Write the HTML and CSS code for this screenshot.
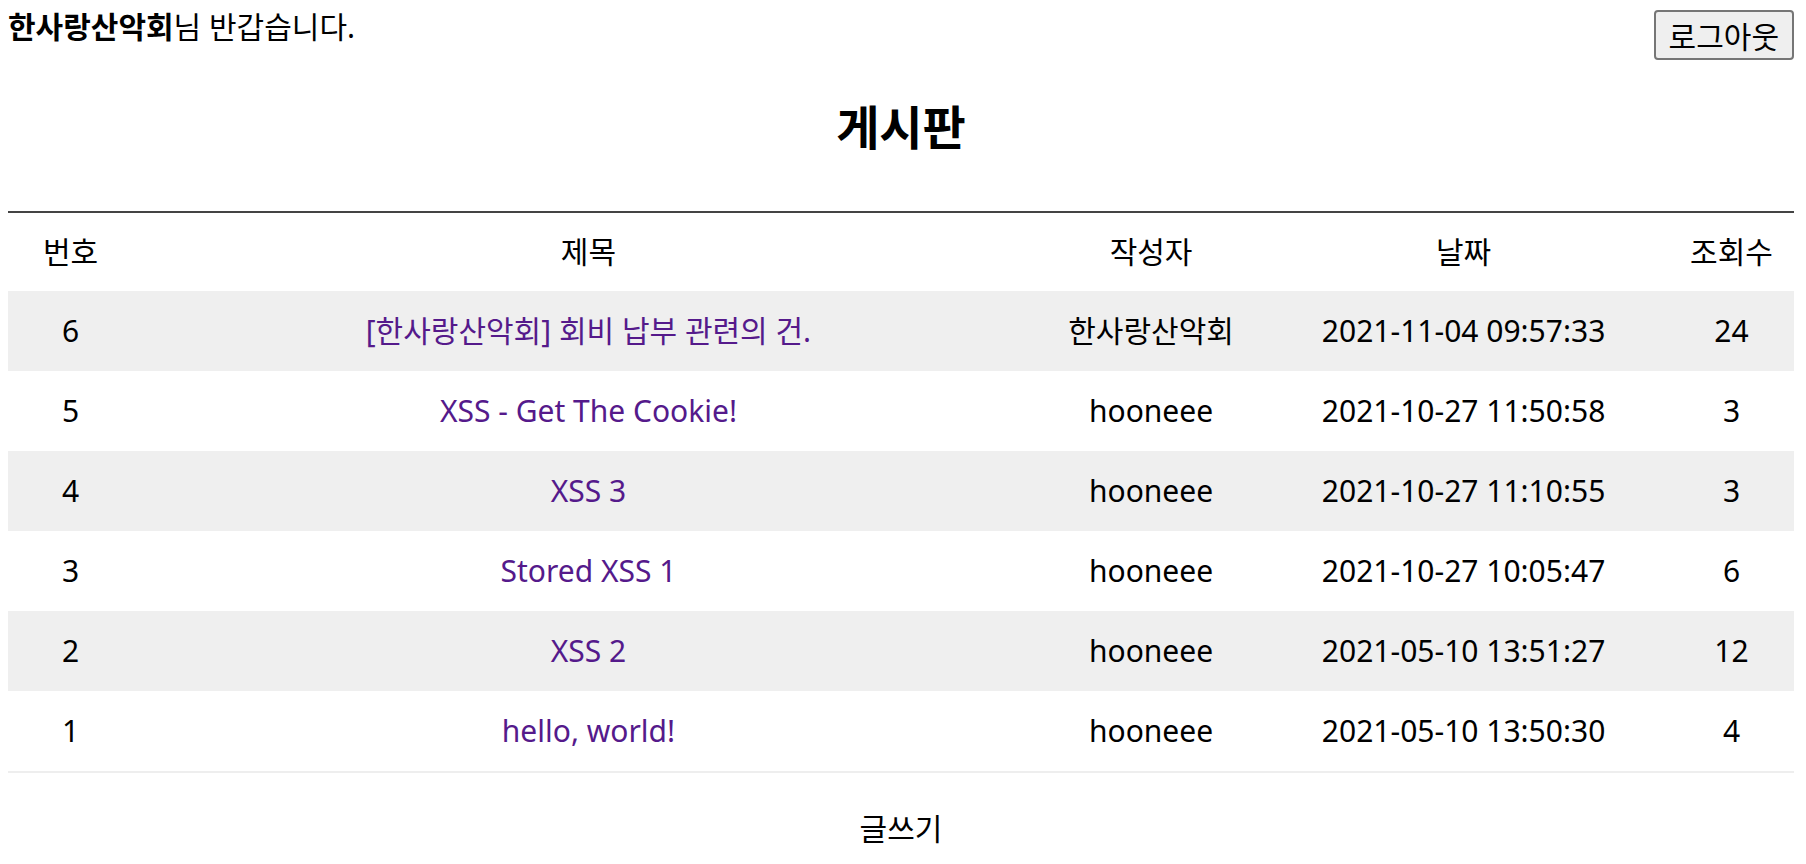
FILE: index.html
```html
<!DOCTYPE html>
<html lang="ko">
<head>
<meta charset="utf-8">
<title>게시판</title>
<link rel="stylesheet" href="styles.css">
</head>
<body>
<div class="topbar">
  <div class="greeting"><b>한사랑산악회</b>님 반갑습니다.</div>
  <button class="logout" type="button">로그아웃</button>
</div>
<h2 class="title">게시판</h2>
<table class="board">
  <colgroup>
    <col class="c-no"><col class="c-title"><col class="c-writer"><col class="c-date"><col class="c-views">
  </colgroup>
  <thead>
    <tr><th>번호</th><th>제목</th><th>작성자</th><th>날짜</th><th>조회수</th></tr>
  </thead>
  <tbody>
    <tr class="alt"><td>6</td><td><a href="#">[한사랑산악회] 회비 납부 관련의 건.</a></td><td>한사랑산악회</td><td>2021-11-04 09:57:33</td><td>24</td></tr>
    <tr><td>5</td><td><a href="#">XSS - Get The Cookie!</a></td><td>hooneee</td><td>2021-10-27 11:50:58</td><td>3</td></tr>
    <tr class="alt"><td>4</td><td><a href="#">XSS 3</a></td><td>hooneee</td><td>2021-10-27 11:10:55</td><td>3</td></tr>
    <tr><td>3</td><td><a href="#">Stored XSS 1</a></td><td>hooneee</td><td>2021-10-27 10:05:47</td><td>6</td></tr>
    <tr class="alt"><td>2</td><td><a href="#">XSS 2</a></td><td>hooneee</td><td>2021-05-10 13:51:27</td><td>12</td></tr>
    <tr class="last"><td>1</td><td><a href="#">hello, world!</a></td><td>hooneee</td><td>2021-05-10 13:50:30</td><td>4</td></tr>
  </tbody>
</table>
<div class="write"><a href="#" class="write-link">글쓰기</a></div>
</body>
</html>
```

FILE: styles.css
```css
html, body {
  background: #fff;
}
body {
  margin: 8px 12px 8px 8px;
  font-family: "Noto Sans", "Noto Sans CJK KR", sans-serif;
  font-size: 30px;
  line-height: 40px;
  color: #000;
}
.topbar {
  display: flex;
  justify-content: space-between;
  align-items: flex-start;
}
.greeting {
  margin-top: -1px;
}
.greeting b {
  font-weight: 700;
}
.logout {
  margin-top: 2px;
  height: 50px;
  box-sizing: border-box;
  padding: 0 13px;
  font-family: "Noto Sans CJK KR", sans-serif;
  font-size: 30px;
  line-height: 40px;
  color: #000;
  background: #efefef;
  border: 2px solid #767676;
  border-radius: 4px;
}
.title {
  margin: 37px 0 54px;
  font-size: 47px;
  line-height: 60px;
  font-weight: 700;
  text-align: center;
}
.board {
  width: 1786px;
  border-collapse: collapse;
  table-layout: fixed;
  border-top: 2px solid #444;
}
.c-no { width: 7%; }
.c-title { width: 51%; }
.c-writer { width: 12%; }
.c-date { width: 23%; }
.c-views { width: 7%; }
.board th {
  font-weight: 400;
  padding: 19px 0;
  text-align: center;
}
.board td {
  padding: 20px 0;
  text-align: center;
  white-space: nowrap;
}
.board tr.alt td {
  background: #efefef;
}
.board tr.last td {
  border-bottom: 2px solid #eeeeee;
}
.board a {
  color: #551a8b;
  text-decoration: none;
}
.write {
  margin-top: 36px;
  text-align: center;
}
.write .write-link {
  color: #000;
  text-decoration: none;
}
```
